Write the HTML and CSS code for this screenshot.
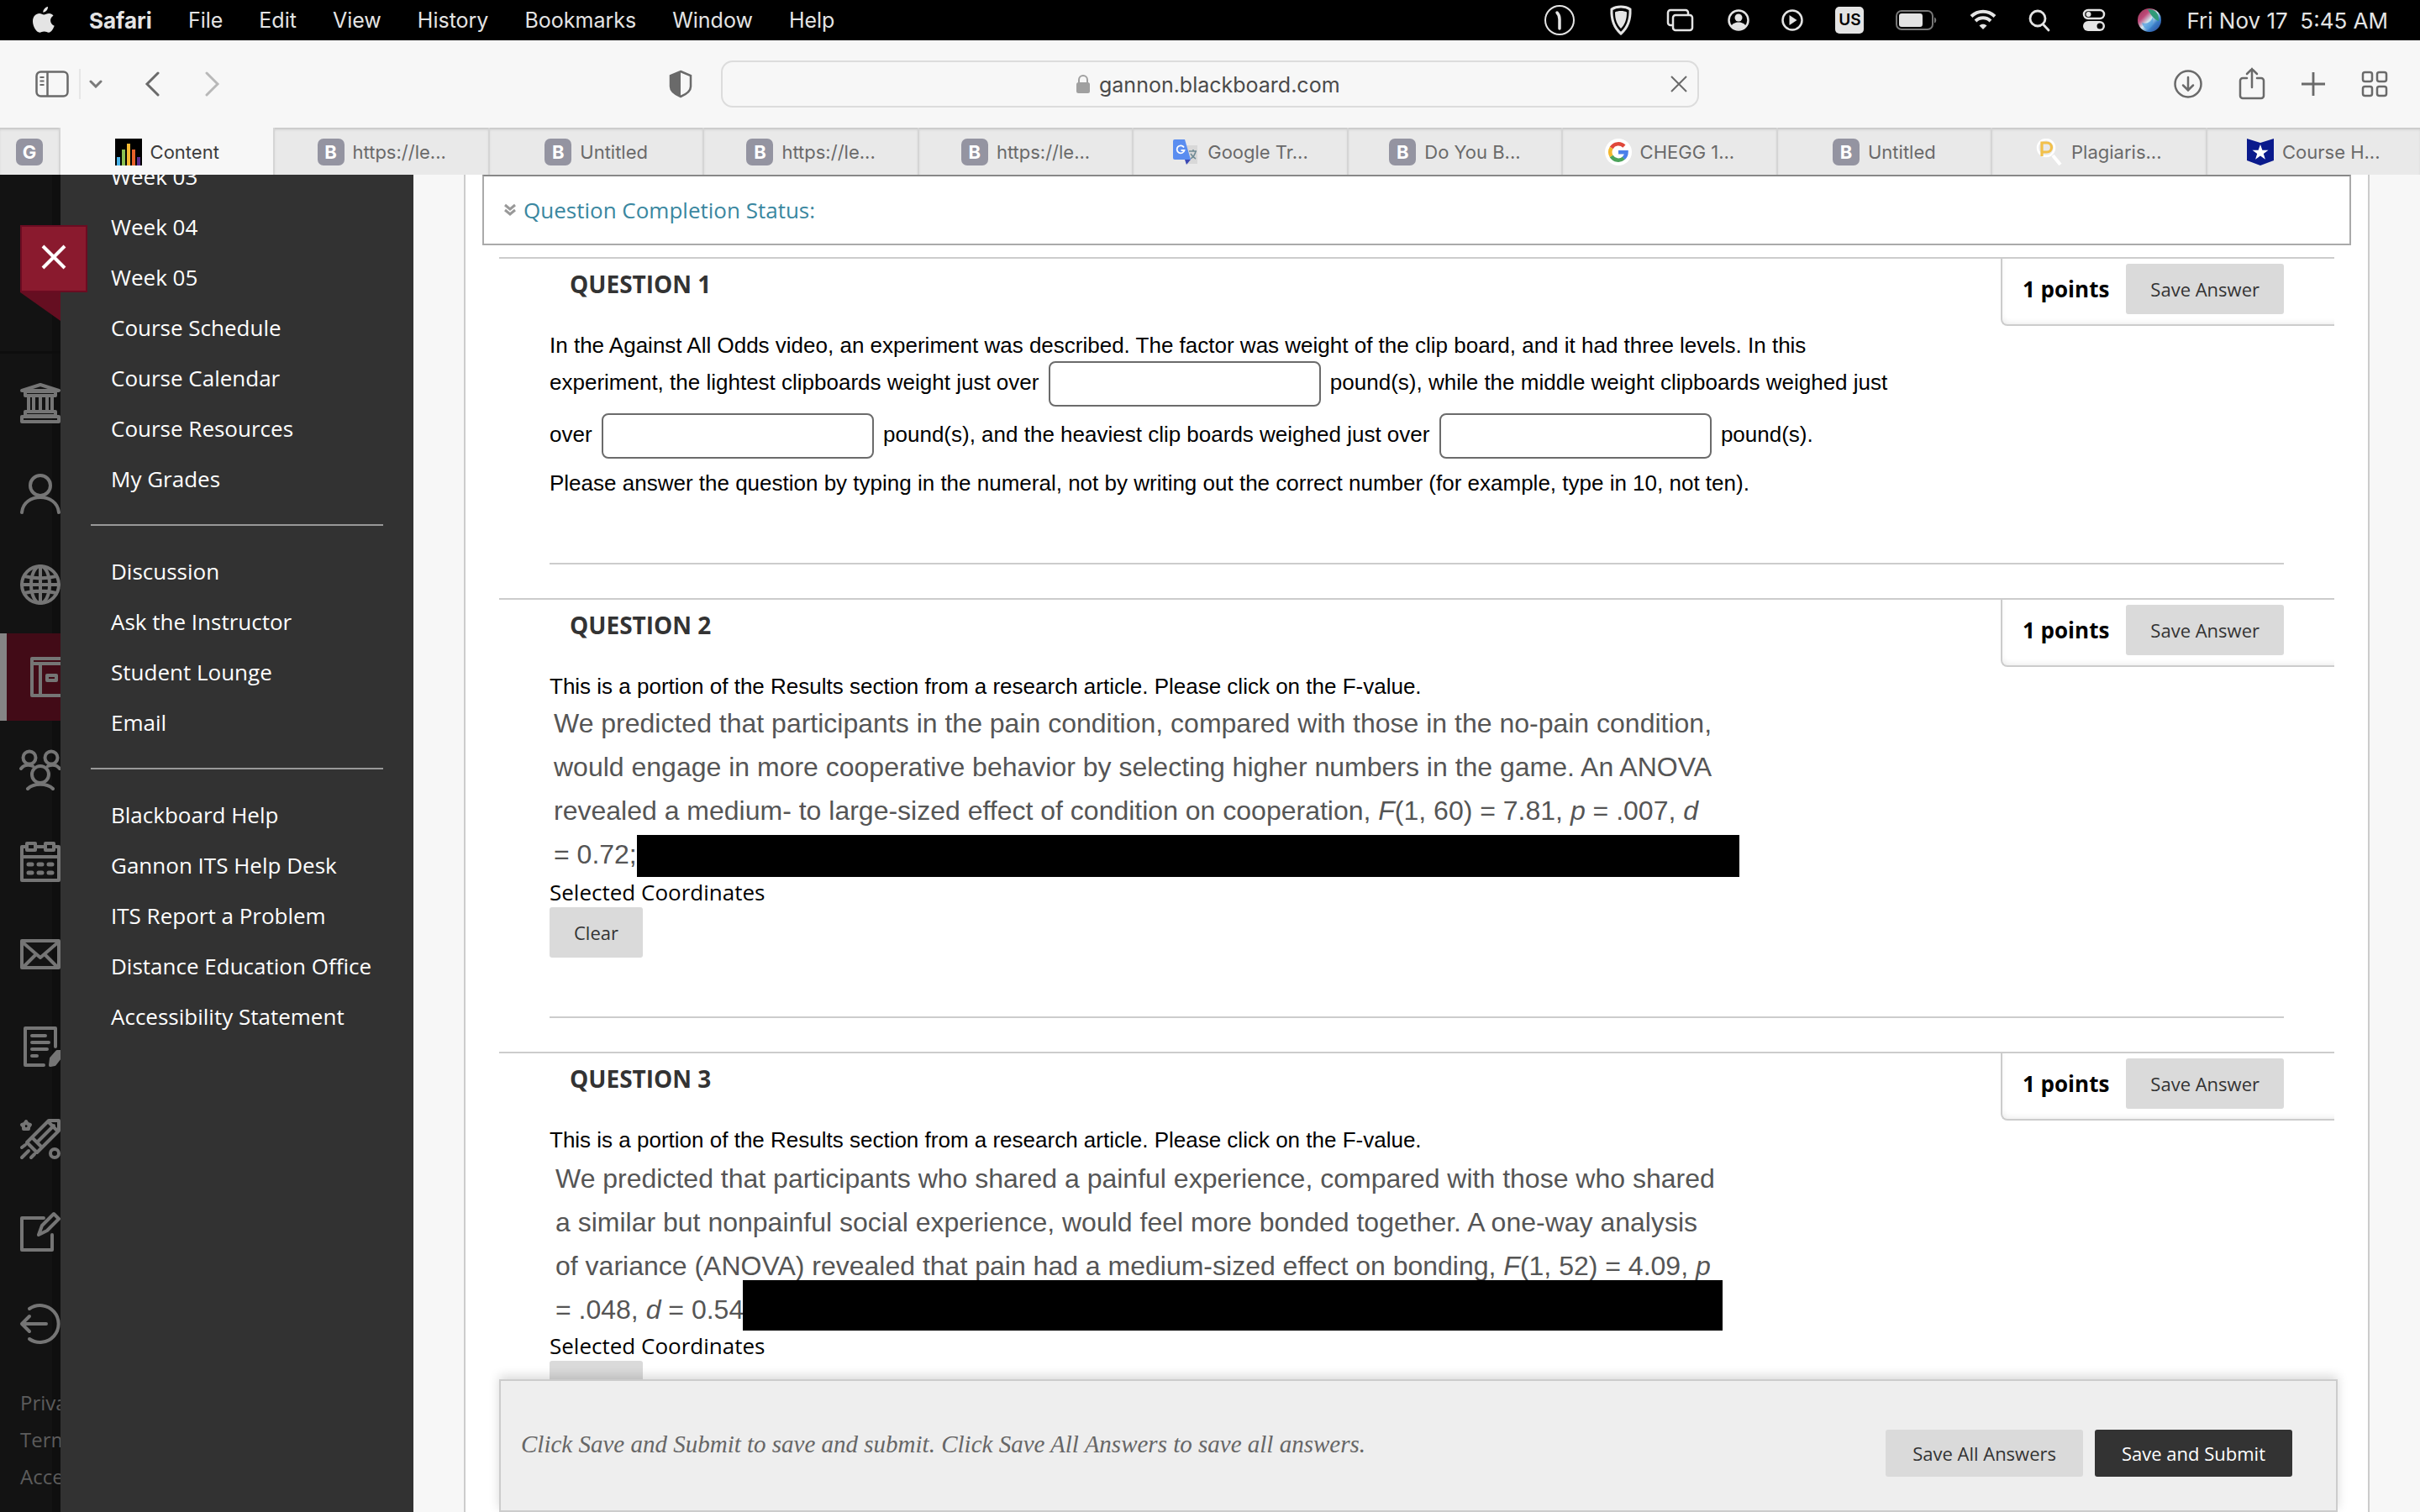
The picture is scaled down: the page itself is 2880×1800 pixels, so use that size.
FILE: index.html
```html
<!DOCTYPE html>
<html lang="en">
<head>
    <meta charset="UTF-8">
    <meta name="viewport" content="width=device-width, initial-scale=1.0">
    <title>Content</title>
    <link rel="stylesheet" href="styles.css">
</head>
<body>
<header class="menubar">
    <nav class="menus">
        <button class="apple" aria-label="Apple menu">
            <svg width="28" height="34" viewBox="0 0 28 34"><path fill="#e4e4e4" d="M19 1c.3 3-2.300 6.600-5.700 6.800C13 4.800 16 1.300 19 1zM25.500 11.700c-2.200 1.300-3.500 3.200-3.400 5.800.1 3 1.800 5.200 4.600 6.300-.9 2.600-3.600 8-6.700 8-1.900 0-2.900-1.200-5.400-1.200s-3.600 1.200-5.400 1.200C5.300 31.800 1 24.500 1 18.600c0-6 3.800-9.500 7.800-9.500 2.300 0 4 1.400 5.400 1.400 1.500 0 3.500-1.500 6.400-1.500 1.800 0 3.800 1 4.900 2.700z"/></svg>
        </button>
        <button class="app-name">Safari</button>
        <button>File</button>
        <button>Edit</button>
        <button>View</button>
        <button>History</button>
        <button>Bookmarks</button>
        <button>Window</button>
        <button>Help</button>
    </nav>
    <div class="status">
        <svg width="40" height="38" viewBox="0 0 40 38"><ellipse cx="20" cy="19" rx="17" ry="17" fill="none" stroke="#e4e4e4" stroke-width="2"/><path d="M17 10c2 2 3 4 3 8v11" fill="none" stroke="#e4e4e4" stroke-width="3.500" stroke-linecap="round"/></svg>
        <svg width="30" height="38" viewBox="0 0 30 38"><path d="M15 3c4 0 8 1 11 3 .6 12-3 22-11 29C7 28 3.400 18 4 6c3-2 7-3 11-3z" fill="none" stroke="#e4e4e4" stroke-width="3"/><path d="M15 8c3 0 5 .5 7 1.500C22 18 20 24 15 29 10 24 8 18 8 9.500 10 8.500 12 8 15 8z" fill="#e4e4e4"/></svg>
        <svg width="36" height="38" viewBox="0 0 36 38" fill="none" stroke="#e4e4e4" stroke-width="2.500"><path d="M8 25H6a3 3 0 0 1-3-3V10a3 3 0 0 1 3-3h18a3 3 0 0 1 3 3v2"/><rect x="9" y="13" width="23" height="18" rx="3"/></svg>
        <svg width="26" height="38" viewBox="0 0 26 38"><circle cx="13" cy="19" r="11.500" fill="none" stroke="#e4e4e4" stroke-width="2.500"/><circle cx="13" cy="16" r="4.500" fill="#e4e4e4"/><path d="M4.500 26c2-6 15-6 17 0-4 5-13 5-17 0z" fill="#e4e4e4"/></svg>
        <svg width="26" height="38" viewBox="0 0 26 38"><circle cx="13" cy="19" r="11.500" fill="none" stroke="#e4e4e4" stroke-width="2.500"/><path d="M9.500 13v12l9-6z" fill="#e4e4e4"/></svg>
        <span class="input-source">US</span>
        <svg width="50" height="38" viewBox="0 0 50 38"><rect x="1" y="8" width="43" height="22" rx="6" fill="none" stroke="#777" stroke-width="2"/><rect x="4" y="11" width="28" height="16" rx="3" fill="#e4e4e4"/><path d="M46 15.500c3 1 3 6 0 7z" fill="#777"/></svg>
        <svg width="32" height="38" viewBox="0 0 32 38" fill="none" stroke="#e4e4e4" stroke-width="4"><path d="M2 14.500c8-7.600 20-7.600 28 0"/><path d="M7 20c5-5 13-5 18 0"/><path d="M16 30l-4.500-4.500c2.500-2.500 6.500-2.500 9 0z" fill="#e4e4e4" stroke="none"/></svg>
        <svg width="26" height="38" viewBox="0 0 26 38" fill="none" stroke="#e4e4e4" stroke-width="2.800" stroke-linecap="round"><circle cx="11" cy="17" r="9"/><path d="M17.500 24l6.500 7"/></svg>
        <svg width="28" height="38" viewBox="0 0 28 38"><rect x="2" y="7" width="24" height="10" rx="5" fill="none" stroke="#e4e4e4" stroke-width="2.500"/><circle cx="7.500" cy="12" r="3" fill="#e4e4e4"/><rect x="1" y="20" width="26" height="12" rx="6" fill="#e4e4e4"/><circle cx="21" cy="26" r="3.500" fill="#000"/></svg>
        <svg width="28" height="38" viewBox="0 0 28 38"><defs><linearGradient id="siri" x1="0" y1="0" x2="1" y2="1"><stop offset="0" stop-color="#8a3550"/><stop offset=".3" stop-color="#c04a7a"/><stop offset=".5" stop-color="#cfe8f0"/><stop offset=".7" stop-color="#3a7ec8"/><stop offset="1" stop-color="#2c3f8f"/></linearGradient></defs><circle cx="14" cy="19" r="14" fill="url(#siri)"/><path d="M12 6c9-1 14 6 13 14-4-1-9-6-13-14z" fill="#2f9a78"/><path d="M5 22c5 2 12 0 13-8 2 9-2 14-6 16-4-1-6-4-7-8z" fill="#4a9be0" opacity=".7"/></svg>
        <time class="clock">Fri Nov 17&nbsp; 5:45 AM</time>
    </div>
</header>

<div class="toolbar">
    <div class="tools tools-left">
        <button aria-label="Show sidebar"><svg width="40" height="32" viewBox="0 0 40 32" fill="none" stroke="#6a6a6a" stroke-width="2.500"><rect x="1.500" y="1.500" width="37" height="29" rx="5"/><path d="M14.500 2v28"/><path d="M5.500 8h5M5.500 12.500h5M5.500 17h5" stroke-width="2"/></svg></button>
        <span class="tool-divider"></span>
        <button class="tool-chevron" aria-label="Tab groups"><svg width="16" height="10" viewBox="0 0 16 10" fill="none" stroke="#7a7a7a" stroke-width="3" stroke-linecap="round"><path d="M2 2l6 6 6-6"/></svg></button>
        <button class="tool-back" aria-label="Back"><svg width="18" height="30" viewBox="0 0 18 30" fill="none" stroke="#6a6a6a" stroke-width="3" stroke-linecap="round"><path d="M16 2L3 15l13 13"/></svg></button>
        <button class="tool-forward" aria-label="Forward"><svg width="18" height="30" viewBox="0 0 18 30" fill="none" stroke="#b8b8b8" stroke-width="3" stroke-linecap="round"><path d="M2 2l13 13L2 28"/></svg></button>
        <button class="privacy" aria-label="Privacy report"><svg width="28" height="34" viewBox="0 0 28 34"><path d="M14 2l12 5v13c0 6-7 10-12 12C9 30 2 26 2 20V7z" fill="none" stroke="#6a6a6a" stroke-width="2.500"/><path d="M14 2v30C9 30 2 26 2 20V7z" fill="#6a6a6a"/></svg></button>
    </div>
    <div class="address">
        <svg width="18" height="24" viewBox="0 0 18 24"><path d="M4 11V7a5 5 0 0 1 10 0v4" fill="none" stroke="#a0a0a0" stroke-width="2"/><rect x="1" y="10" width="16" height="13" rx="2.500" fill="#a0a0a0"/></svg>
        <input class="address-input" type="text" aria-label="Address" value="gannon.blackboard.com">
        <button class="stop" aria-label="Stop loading"><svg width="20" height="20" viewBox="0 0 20 20" fill="none" stroke="#6a6a6a" stroke-width="2"><path d="M1 1l18 18M19 1L1 19"/></svg></button>
    </div>
    <div class="tools tools-right">
        <button aria-label="Downloads"><svg width="34" height="38" viewBox="0 0 34 38" fill="none" stroke="#6a6a6a" stroke-width="2.500" stroke-linecap="round"><circle cx="17" cy="19" r="15.500"/><path d="M17 11v15M11 20.500l6 6 6-6"/></svg></button>
        <button aria-label="Share"><svg width="32" height="42" viewBox="0 0 32 42" fill="none" stroke="#6a6a6a" stroke-width="2.500" stroke-linecap="round"><path d="M10 14H5a3 3 0 0 0-3 3v18a3 3 0 0 0 3 3h22a3 3 0 0 0 3-3V17a3 3 0 0 0-3-3h-5"/><path d="M16 25V3M10 9l6-6 6 6"/></svg></button>
        <button aria-label="New tab"><svg width="28" height="28" viewBox="0 0 28 28" fill="none" stroke="#6a6a6a" stroke-width="2.800"><path d="M14 0v28M0 14h28"/></svg></button>
        <button aria-label="Tab overview"><svg width="32" height="32" viewBox="0 0 32 32" fill="none" stroke="#6a6a6a" stroke-width="2.500"><rect x="2" y="2" width="11" height="11" rx="2.500"/><rect x="19" y="2" width="11" height="11" rx="2.500"/><rect x="2" y="19" width="11" height="11" rx="2.500"/><rect x="19" y="19" width="11" height="11" rx="2.500"/></svg></button>
    </div>
</div>

<nav class="tabs">
    <a class="tab tab-pinned" href="#"><span class="letter">G</span></a>
    <a class="tab tab-active" href="#"><svg width="32" height="32" viewBox="0 0 32 32"><path fill="#000" d="M0 0h32v32H0z"/><path fill="#4ab4ea" d="M2 22h4v10H2z"/><path fill="#8cc152" d="M8 13h4v19H8z"/><path fill="#f5b933" d="M14 6h4v26h-4z"/><path fill="#e8622a" d="M20 13h4v19h-4z"/><path fill="#5c2d91" d="M26 22h4v10h-4z"/></svg>Content</a>
    <a class="tab" href="#"><span class="letter">B</span>https://le...</a>
    <a class="tab" href="#"><span class="letter">B</span>Untitled</a>
    <a class="tab" href="#"><span class="letter">B</span>https://le...</a>
    <a class="tab" href="#"><span class="letter">B</span>https://le...</a>
    <a class="tab" href="#"><svg width="32" height="32" viewBox="0 0 32 32"><path fill="#d8d8d8" d="M12 8h18v22H17z"/><path fill="#5a8df0" d="M3 1h12l7 24H3a2 2 0 0 1-2-2V3a2 2 0 0 1 2-2z"/><path fill="#3a49b5" d="M15 25h7l-5 6z"/><path d="M14 10.500a4.500 4.500 0 1 0 .5 3.500h-4" fill="none" stroke="#fff" stroke-width="1.800"/><path d="M20 15h9M25 13v2M28 15c-1 5-3 7-6 9M22 18c2 3 4 5 6 6" fill="none" stroke="#6f8a94" stroke-width="1.500"/></svg>Google Tr...</a>
    <a class="tab" href="#"><span class="letter">B</span>Do You B...</a>
    <a class="tab" href="#"><svg width="32" height="32" viewBox="0 0 32 32"><circle cx="16" cy="16" r="16" fill="#fff"/><g fill="none" stroke-width="4.500"><path stroke="#e0483b" d="M7.700 11A9.700 9.700 0 0 1 22.900 9.200"/><path stroke="#f3b72e" d="M7.700 21A9.700 9.700 0 0 1 7.700 11"/><path stroke="#4ba35a" d="M22.500 23.200A9.700 9.700 0 0 1 7.700 21"/><path stroke="#4b80ea" d="M16 16.200h9.500A9.700 9.700 0 0 1 22.300 23.300"/></g></svg>CHEGG 1...</a>
    <a class="tab" href="#"><span class="letter">B</span>Untitled</a>
    <a class="tab" href="#"><svg width="32" height="32" viewBox="0 0 32 32" fill="none"><circle cx="12" cy="11" r="10" stroke="#fff" stroke-width="2.500"/><path d="M20 20l9 11" stroke="#fff" stroke-width="4"/><path d="M7 21V5h6a5.500 5.500 0 0 1 0 11H8" stroke="#f2c04a" stroke-width="3.200"/></svg>Plagiaris...</a>
    <a class="tab" href="#"><svg width="32" height="32" viewBox="0 0 32 32"><path fill="#0a1a8c" d="M0 0l16 5L32 0v26l-16 6-16-6z"/><path fill="#fff" d="M16 7l2.400 6.700h7.100l-5.700 4.200 2.100 6.800-5.900-4.100-5.900 4.100 2.100-6.800-5.700-4.200h7.100z"/></svg>Course H...</a>
</nav>

<div class="page">
    <nav class="rail">
        <a class="rail-item" href="#" aria-label="Institution"><svg width="48" height="48" viewBox="0 0 48 48"><path d="M2 9l22-7 22 7zM6 10h36v5H6zM6 34h36v5H6zM2 40h44v6H2z"/><path d="M10 16v18M16 16v18M24 16v18M32 16v18M38 16v18"/></svg></a>
        <a class="rail-item rail-profile" href="#" aria-label="Profile"><svg width="48" height="48" viewBox="0 0 48 48"><circle cx="24" cy="14" r="12"/><path d="M2 46c2-24 42-24 44 0"/></svg></a>
        <a class="rail-item" href="#" aria-label="Activity"><svg width="48" height="48" viewBox="0 0 48 48"><circle cx="24" cy="24" r="22"/><ellipse cx="24" cy="24" rx="11" ry="22"/><path d="M24 2v44M2 24h44M5 14c12 3 26 3 38 0M5 34c12-3 26-3 38 0"/></svg></a>
        <a class="rail-item rail-active" href="#" aria-label="Courses"><svg width="48" height="48" viewBox="0 0 48 48"><path d="M2 2h44v44H2zM2 8h44M12 8v38M20 22h11v6H20z"/></svg></a>
        <a class="rail-item" href="#" aria-label="Organizations"><svg width="48" height="48" viewBox="0 0 48 48"><circle cx="11" cy="10" r="7.500"/><circle cx="37" cy="10" r="7.500"/><circle cx="24" cy="30" r="10"/><path d="M1 23c4-5 9-5 14-3M47 23c-4-5-9-5-14-3M9 47c7-7 23-7 30 0"/></svg></a>
        <a class="rail-item" href="#" aria-label="Calendar"><svg width="48" height="48" viewBox="0 0 48 48"><path d="M7 6H2v40h44V6h-5M19 6h10M2 18h44M8 2h10v8H8zM30 2h10v8H30z"/><path d="M10 27h4M22 27h4M34 27h4M10 37h4M22 37h4M34 37h4" stroke-width="5"/></svg></a>
        <a class="rail-item" href="#" aria-label="Messages"><svg width="48" height="48" viewBox="0 0 48 48"><path d="M2 8h44v32H2zM2 9l22 19L46 9M3 40l16-16M45 40L29 24"/></svg></a>
        <a class="rail-item" href="#" aria-label="Grades"><svg width="48" height="48" viewBox="0 0 48 48"><path d="M42 24V2H6v44h22M14 11h16M14 19h20M14 27h18M14 35h6"/><path d="M36 46l1-8 7-8h6l-2 6-7 9z" fill="#757575"/></svg></a>
        <a class="rail-item" href="#" aria-label="Tools"><svg width="48" height="48" viewBox="0 0 48 48"><path d="M8 28L34 2h12v12L20 40zM14 22l12 12M20 28L40 8M33 3l12 12M2 34l4-3M2 46l8-8M13 46l4-4"/><circle cx="41" cy="41" r="5"/><path d="M7 3l2 3 3 1-2 3v2H4V9L2 7l3-1z"/></svg></a>
        <a class="rail-item" href="#" aria-label="Assist"><svg width="48" height="48" viewBox="0 0 48 48"><path d="M28 8H2v38h36V28M22 28l4-11L40 3l6 6-14 14z"/></svg></a>
        <a class="rail-item" href="#" aria-label="Sign out"><svg width="48" height="48" viewBox="0 0 48 48"><path d="M11 6a22 22 0 1 1 0 36M31 24H3M11 15l-9 9 9 9"/></svg></a>
        <div class="rail-links">
            <a href="#">Privacy</a>
            <a href="#">Terms</a>
            <a href="#">Accessibility</a>
        </div>
    </nav>

    <aside class="course-menu">
        <div class="flag">
            <button class="flag-close" aria-label="Close"><svg width="30" height="30" viewBox="0 0 30 30" fill="none" stroke="#fff" stroke-width="4"><path d="M2 2l26 26M28 2L2 28"/></svg></button>
            <svg class="flag-fold" width="48" height="34" viewBox="0 0 48 34"><path d="M0 0h48v34z" fill="#650e21"/></svg>
        </div>
        <ul>
            <li><a href="#">Week 03</a></li>
            <li><a href="#">Week 04</a></li>
            <li><a href="#">Week 05</a></li>
            <li><a href="#">Course Schedule</a></li>
            <li><a href="#">Course Calendar</a></li>
            <li><a href="#">Course Resources</a></li>
            <li><a href="#">My Grades</a></li>
        </ul>
        <ul>
            <li><a href="#">Discussion</a></li>
            <li><a href="#">Ask the Instructor</a></li>
            <li><a href="#">Student Lounge</a></li>
            <li><a href="#">Email</a></li>
        </ul>
        <ul>
            <li><a href="#">Blackboard Help</a></li>
            <li><a href="#">Gannon ITS Help Desk</a></li>
            <li><a href="#">ITS Report a Problem</a></li>
            <li><a href="#">Distance Education Office</a></li>
            <li><a href="#">Accessibility Statement</a></li>
        </ul>
    </aside>

    <main class="content">
        <div class="completion">
            <svg width="14" height="16" viewBox="0 0 14 16" fill="none" stroke="#999" stroke-width="3"><path d="M1 2l6 5 6-5M1 8l6 5 6-5"/></svg>
            <a href="#">Question Completion Status:</a>
        </div>

        <section class="question">
            <div class="question-head">
                <h2>QUESTION 1</h2>
                <div class="points"><span>1 points</span><button class="btn">Save Answer</button></div>
            </div>
            <div class="question-body">
                <p>In the Against All Odds video, an experiment was described. The factor was weight of the clip board, and it had three levels. In this<br>
                    experiment, the lightest clipboards weight just over <input class="blank" type="text" aria-label="Lightest weight"> pound(s), while the middle weight clipboards weighed just<br>
                    over <input class="blank" type="text" aria-label="Middle weight"> pound(s), and the heaviest clip boards weighed just over <input class="blank" type="text" aria-label="Heaviest weight"> pound(s).</p>
                <p class="hint">Please answer the question by typing in the numeral, not by writing out the correct number (for example, type in 10, not ten).</p>
            </div>
        </section>

        <section class="question">
            <div class="question-head">
                <h2>QUESTION 2</h2>
                <div class="points"><span>1 points</span><button class="btn">Save Answer</button></div>
            </div>
            <div class="question-body">
                <p>This is a portion of the Results section from a research article. Please click on the F-value.</p>
                <div class="passage passage-cooperation">
                    We predicted that participants in the pain condition, compared with those in the no-pain condition,<br>
                    would engage in more cooperative behavior by selecting higher numbers in the game. An ANOVA<br>
                    revealed a medium- to large-sized effect of condition on cooperation, <i>F</i>(1, 60) = 7.81, <i>p</i> = .007, <i>d</i><br>
                    = 0.72;
                    <span class="redacted"></span>
                </div>
                <p class="coordinates">Selected Coordinates</p>
                <button class="btn">Clear</button>
            </div>
        </section>

        <section class="question">
            <div class="question-head">
                <h2>QUESTION 3</h2>
                <div class="points"><span>1 points</span><button class="btn">Save Answer</button></div>
            </div>
            <div class="question-body">
                <p>This is a portion of the Results section from a research article. Please click on the F-value.</p>
                <div class="passage passage-bonding">
                    We predicted that participants who shared a painful experience, compared with those who shared<br>
                    a similar but nonpainful social experience, would feel more bonded together. A one-way analysis<br>
                    of variance (ANOVA) revealed that pain had a medium-sized effect on bonding, <i>F</i>(1, 52) = 4.09, <i>p</i><br>
                    = .048, <i>d</i> = 0.54
                    <span class="redacted"></span>
                </div>
                <p class="coordinates">Selected Coordinates</p>
                <button class="btn">Clear</button>
            </div>
        </section>

        <footer class="submit-bar">
            <p>Click Save and Submit to save and submit. Click Save All Answers to save all answers.</p>
            <button class="btn">Save All Answers</button>
            <button class="btn btn-dark">Save and Submit</button>
        </footer>
    </main>
</div>
</body>
</html>
```
FILE: styles.css
```css
* {
    box-sizing: border-box;
}
body {
    margin: 0;
    height: 100vh;
    display: flex;
    flex-direction: column;
    overflow: hidden;
    background: #f7f7f7;
    font-family: "Open Sans", sans-serif;
    font-size: 26px;
    color: #000;
}
button, input {
    font: inherit;
    color: inherit;
    border: none;
    background: none;
    padding: 0;
}
svg {
    display: block;
    flex: none;
}
a {
    color: inherit;
    text-decoration: none;
}
p, h2, ul {
    margin: 0;
    padding: 0;
}

/* system menu bar */
.menubar {
    height: 48px;
    flex: none;
    padding: 0 38px;
    display: flex;
    justify-content: space-between;
    align-items: center;
    background: #000;
    color: #e4e4e4;
    font-family: Inter, sans-serif;
    font-size: 25px;
}
.menus {
    display: flex;
    align-items: center;
    gap: 43px;
}
.apple {
    margin-right: -3px;
}
.app-name {
    font-size: 26px;
    font-weight: 700;
}
.status {
    display: flex;
    align-items: center;
    gap: 38px;
}
.input-source {
    width: 34px;
    background: #e4e4e4;
    border-radius: 5px;
    color: #000;
    font-size: 19px;
    font-weight: 600;
    line-height: 32px;
    text-align: center;
}
.clock {
    margin-left: -8px;
    font-size: 26px;
}

/* browser toolbar */
.toolbar {
    height: 104px;
    flex: none;
    padding: 0 38px;
    display: grid;
    grid-template-columns: 1fr minmax(0, 1164px) 1fr;
    align-items: center;
    gap: 34px;
    font-family: Inter, sans-serif;
}
.tools {
    display: flex;
    align-items: center;
}
.tools-left {
    padding-left: 4px;
}
.tool-divider {
    width: 2px;
    height: 36px;
    margin: 0 10px 0 12px;
    background: #e6e6e6;
}
.tool-back {
    margin-left: 50px;
}
.tool-forward {
    margin-left: 54px;
}
.privacy {
    margin-left: auto;
}
.tools-right {
    justify-content: flex-end;
    gap: 43px;
}
.address {
    height: 56px;
    border: 2px solid #dcdcdc;
    border-radius: 14px;
    display: flex;
    align-items: center;
    justify-content: center;
    gap: 10px;
    position: relative;
}
.address-input {
    width: 292px;
    padding-top: 2px;
    font-size: 25px;
    color: #4a4a4a;
}
.stop {
    position: absolute;
    right: 12px;
}

/* tab strip */
.tabs {
    height: 56px;
    flex: none;
    display: flex;
    background: #e9e9e9;
    font-family: Inter, sans-serif;
    font-size: 22px;
    color: #6a6a6a;
}
.tab {
    flex: 1;
    padding-top: 2px;
    display: flex;
    align-items: center;
    justify-content: center;
    gap: 10px;
    border-left: 2px solid #d5d5d5;
    box-shadow: inset 0 3px 3px -1px #c4c4c4;
}
.tab-pinned {
    flex: 0 0 70px;
    border-left: none;
}
.tab-active {
    background: #f7f7f7;
    box-shadow: none;
    color: #3c3c3c;
}
.letter {
    width: 32px;
    border-radius: 7px;
    background: #9494a1;
    color: #fff;
    font-size: 22px;
    font-weight: 700;
    line-height: 32px;
    text-align: center;
}

/* page */
.page {
    flex: 1;
    min-height: 0;
    display: flex;
    overflow: hidden;
}
.rail {
    width: 72px;
    flex: none;
    padding-top: 220px;
    overflow: hidden;
    background: linear-gradient(#0d0d0d, #0d0d0d) 0 210px / 100% 3px no-repeat, linear-gradient(90deg, #131313 62px, #0f0f0f 62px);
}
.rail-item {
    height: 104px;
    margin-bottom: 6px;
    padding-left: 24px;
    display: flex;
    align-items: center;
}
.rail-item svg {
    overflow: visible;
    fill: none;
    stroke: #757575;
    stroke-width: 4px;
    stroke-linecap: round;
    stroke-linejoin: round;
}
.rail-profile {
    height: 100px;
}
.rail-active {
    padding-left: 28px;
    border-left: 8px solid #858585;
    background: #420b17;
}
.rail-links {
    padding: 14px 0 0 24px;
    display: flex;
    flex-direction: column;
    color: #5c5c5c;
    font-size: 24px;
    line-height: 44px;
}
.course-menu {
    width: 420px;
    flex: none;
    padding: 0 36px;
    background: #323232;
    color: #fff;
    position: relative;
}
.course-menu ul {
    list-style: none;
    padding: 24px;
    border-bottom: 2px solid #999;
}
/* the list is scrolled: the first entry is half under the tab strip */
.course-menu ul:first-of-type {
    margin-top: -52px;
}
.course-menu ul:last-child {
    border-bottom: none;
}
.course-menu li {
    line-height: 60px;
    white-space: nowrap;
}
.flag {
    position: absolute;
    left: -48px;
    top: 60px;
}
.flag-close {
    width: 80px;
    height: 80px;
    display: flex;
    align-items: center;
    justify-content: center;
    padding-bottom: 4px;
    border: 2px solid #6b0c22;
    background: #8a1a2e;
}
.content {
    flex: 1;
    min-width: 0;
    margin: 0 60px;
    padding: 0 20px;
    background: #fff;
    border: solid #ccc;
    border-width: 0 2px;
    overflow: hidden;
    position: relative;
}
.completion {
    height: 84px;
    padding-left: 24px;
    display: flex;
    align-items: center;
    gap: 9px;
    border: 2px solid #aaa;
    border-top-color: #888;
    color: #3a87a0;
}
.question {
    margin: 40px 20px 0;
    border-top: 2px solid #ccc;
}
.completion + .question {
    margin-top: 14px;
}
.question-head {
    display: flex;
    justify-content: space-between;
    align-items: flex-start;
}
.question-head h2 {
    padding: 10px 0 0 84px;
    color: #333;
    font-size: 28px;
    line-height: 40px;
}
.points {
    padding: 6px 60px 12px 24px;
    display: flex;
    align-items: center;
    gap: 20px;
    border: solid #ccc;
    border-width: 0 0 2px 2px;
    border-bottom-left-radius: 8px;
    box-shadow: inset 3px -6px 6px -4px #eee;
    font-weight: 700;
}
.btn {
    height: 60px;
    padding: 0 29px;
    border-radius: 3px;
    background: #dadada;
    color: #333;
    font-size: 22px;
    font-weight: 400;
}
.question-body {
    margin: 8px 60px 0;
    padding-bottom: 70px;
    border-bottom: 2px solid #ccc;
}
.question-body p {
    font-family: "Liberation Sans", Arial, sans-serif;
    line-height: 30px;
}
.question-body .hint {
    margin: 10px 0;
}
.question-body .coordinates {
    font-family: "Open Sans", sans-serif;
    line-height: 36px;
}
.blank {
    width: 324px;
    height: 54px;
    margin: 4px;
    border: 2px solid #6b6b6b;
    border-radius: 8px;
    background: #fff;
    vertical-align: middle;
}
.passage {
    height: 212px;
    padding: 3px 5px 0;
    position: relative;
    color: #555;
    font-family: "Liberation Sans", Arial, sans-serif;
    font-size: 32px;
    line-height: 52px;
}
.passage-cooperation {
    max-width: 1416px;
}
.passage-bonding {
    max-width: 1396px;
    padding: 5px 7px 0;
}
.redacted {
    position: absolute;
    right: 0;
    bottom: 0;
    left: 104px;
    height: 50px;
    background: #000;
}
.passage-bonding .redacted {
    left: 230px;
    height: 60px;
}

/* stays over the scrolled questions */
.submit-bar {
    position: absolute;
    right: 36px;
    bottom: 0;
    left: 40px;
    padding: 58px 52px 40px 24px;
    display: flex;
    align-items: flex-start;
    gap: 14px;
    border: 2px solid #ccc;
    background: #eee;
    box-shadow: 0 -4px 12px rgba(0, 0, 0, 0.15);
}
.submit-bar p {
    flex: 1;
    color: #666;
    font-family: "Liberation Serif", Georgia, serif;
    font-size: 29px;
    font-style: italic;
    line-height: 34px;
}
.submit-bar .btn {
    height: 56px;
    padding: 0 32px;
}
.submit-bar .btn-dark {
    background: #333;
    color: #fff;
}
```
